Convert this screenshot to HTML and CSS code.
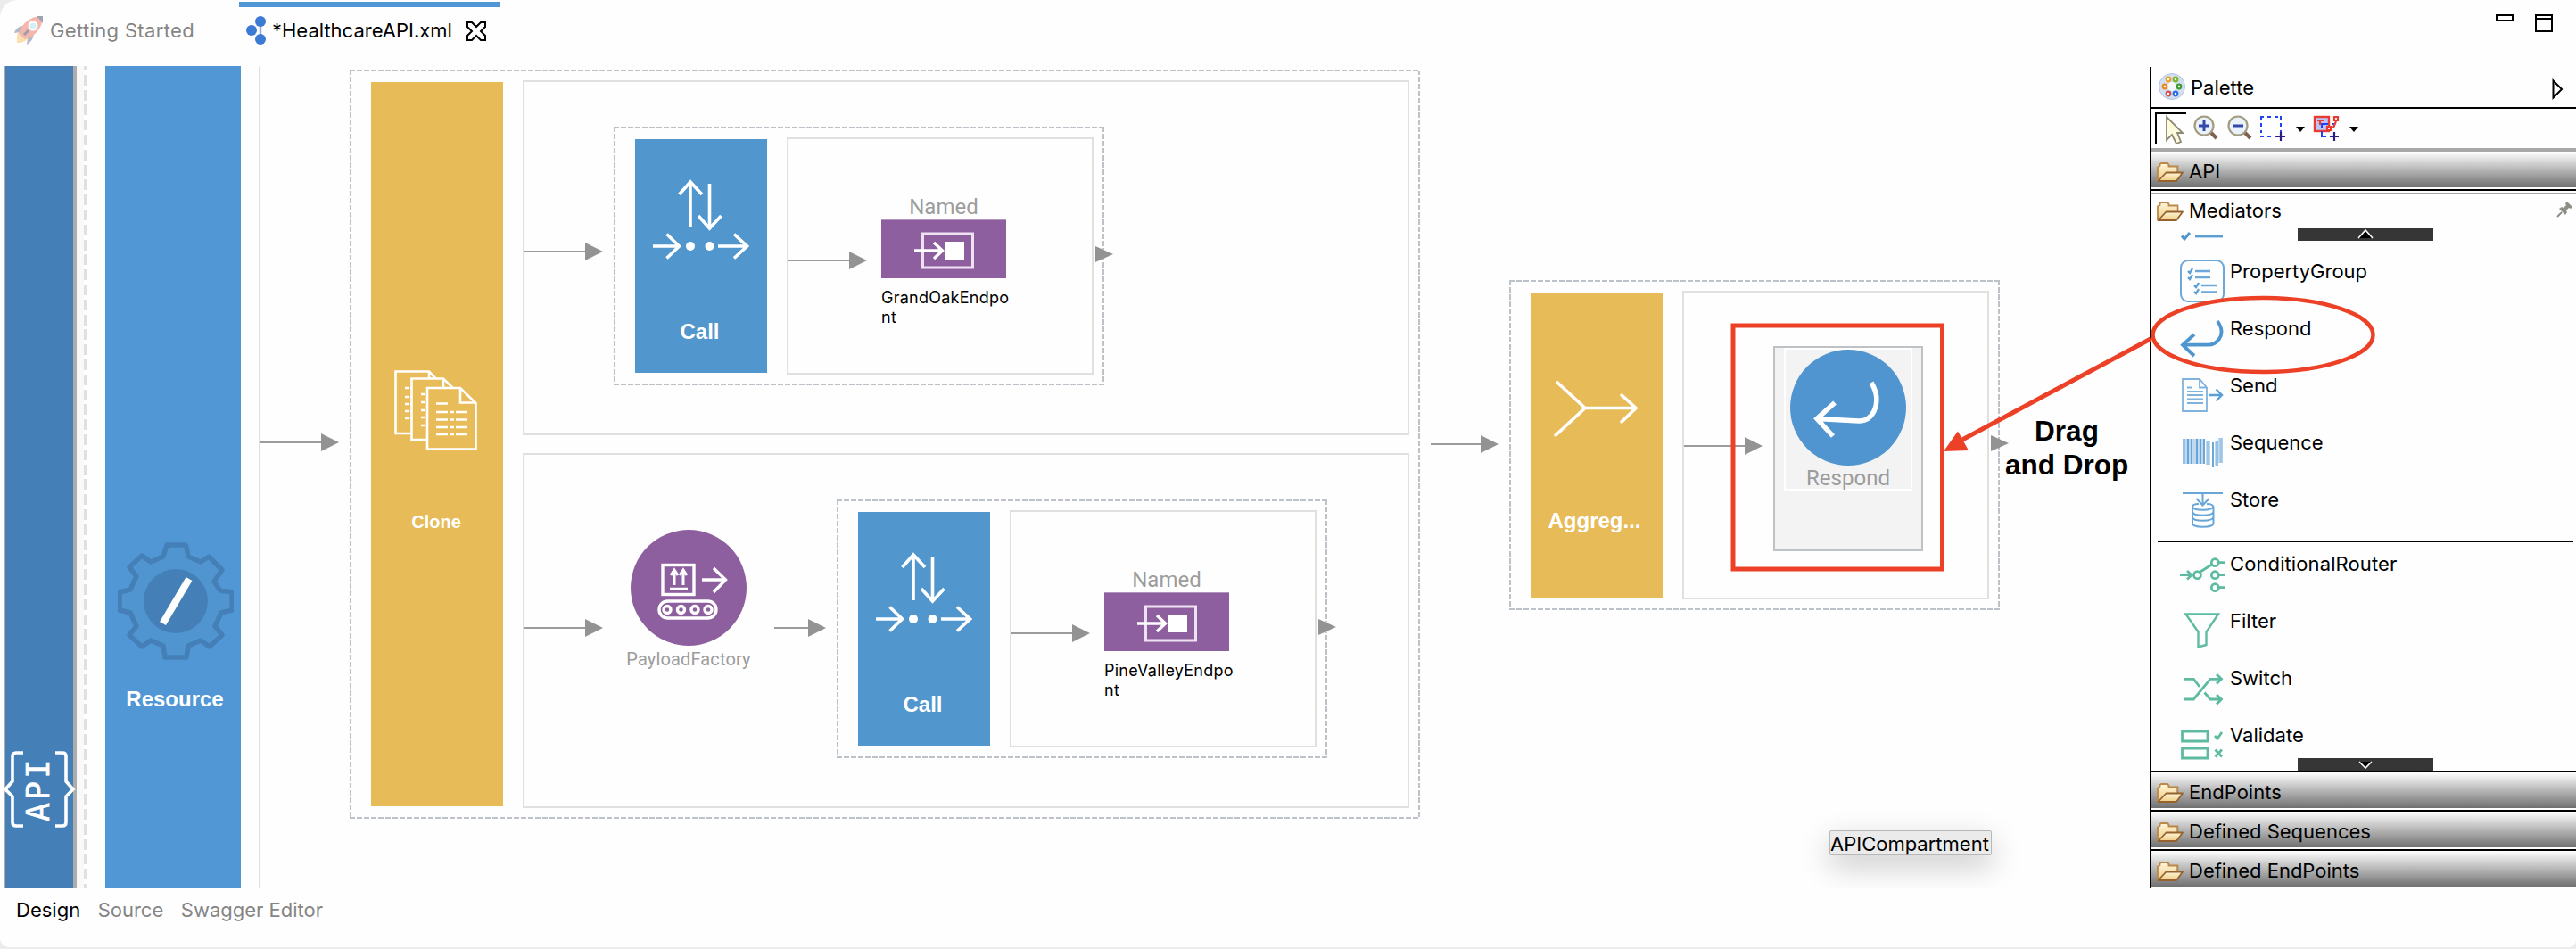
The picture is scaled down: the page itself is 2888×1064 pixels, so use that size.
FILE: index.html
```
<!DOCTYPE html>
<html lang="en">
<head>
<meta charset="utf-8">
<title>HealthcareAPI.xml</title>
<link rel="stylesheet" href="styles.css">
</head>
<body>
<svg class="defs" width="0" height="0" aria-hidden="true">
  <defs>
    <linearGradient id="folderFill" x1="0" y1="0" x2="0" y2="1">
      <stop offset="0" stop-color="#fff6dc"/><stop offset="1" stop-color="#efcb80"/>
    </linearGradient>
    <symbol id="folder" viewBox="0 0 30 22">
      <path d="M1 4V21H5L13 11H22V5H13L12 1H5Z" fill="url(#folderFill)"/>
      <path d="M1 21V5.500L3.500 4V2L5 1H12L13.500 2.500V4.500H23.500V11" fill="none" stroke="#bb8848" stroke-width="1.800"/>
      <path d="M1.500 21L10.500 11.500H29L22 21Z" fill="url(#folderFill)" stroke="#96632f" stroke-width="1.800" stroke-linejoin="round"/>
    </symbol>
    <symbol id="callIcon" viewBox="0 0 108 120">
      <g fill="none" stroke="#fff" stroke-width="3.600">
        <path d="M42 57V6M29.500 20L42 6L55 20"/>
        <path d="M63.500 8V58M51 44L63.500 58L76.500 44"/>
        <path d="M0 78H29M15.500 64.500L29.500 78L15.500 91.500"/>
        <path d="M73 78H105M91 64.500L105.500 78L91 91.500"/>
      </g>
      <circle cx="42" cy="78" r="5" fill="#fff"/><circle cx="63.500" cy="78" r="5" fill="#fff"/>
    </symbol>
    <symbol id="endpointIcon" viewBox="0 0 68 42">
      <g fill="none" stroke="#fff">
        <rect x="9.500" y="2" width="56" height="38" stroke-width="3" stroke="#eee2f2"/>
        <path d="M0 21H31M22 12L31.500 21L22 30" stroke-width="3.400"/>
      </g>
      <rect x="35" y="11" width="21" height="20" fill="#fff"/>
    </symbol>
  </defs>
</svg>

<div class="window">
  <header class="tabs">
    <div class="tab">
      <svg width="32" height="32" viewBox="0 0 32 32">
        <path d="M3 24C3 18 7 15 12 18L16 22C15 28 10 30 3 30Z" fill="#fbdfae"/>
        <path d="M0 19C2 13 7 10 13 11L8 18ZM22 17C22 23 20 29 14 32L15 25Z" fill="#b5bac6"/>
        <path d="M5 20C8 9 17 0 32 0C32 13 23 23 12 26Z" fill="#f5b7ab"/>
        <path d="M25 0H32V8Z" fill="#9ea4ae"/>
        <path d="M11 21L16 16" stroke="#98a0ae" stroke-width="3"/>
        <circle cx="21" cy="11" r="4.500" fill="#d4effa" stroke="#fff" stroke-width="2"/>
      </svg>
      <span class="tab-name spaced">Getting Started</span>
    </div>
    <div class="tab active">
      <svg width="22" height="32" viewBox="0 0 22 32">
        <path d="M16 6V26M6 16H10" stroke="#3b7bd4" stroke-width="2.500" stroke-opacity=".6"/>
        <g fill="#3b7bd4"><circle cx="16" cy="6" r="6"/><circle cx="6" cy="16" r="6"/><circle cx="16" cy="26" r="6"/></g>
      </svg>
      <span class="tab-name">*HealthcareAPI.xml</span>
      <svg class="close" width="22" height="22" viewBox="0 0 22 22">
        <path d="M1 1H6L11 6L16 1H21V6L16 11L21 16V21H16L11 16L6 21H1V16L6 11L1 6Z" fill="none" stroke="#000" stroke-width="2"/>
      </svg>
    </div>
    <svg class="window-buttons" width="66" height="22" viewBox="0 0 66 22">
      <path d="M1 1H19V7H1ZM45 1H63V19H45ZM45 5H63" fill="none" stroke="#000" stroke-width="2"/>
    </svg>
  </header>

  <div class="workbench">
    <main class="canvas">
      <div class="api-strip">
        <svg class="api-braces" width="82" height="86" viewBox="0 0 82 86">
          <path d="M22 2H14Q10 2 10 6V34L2 43L10 51V80Q10 84 14 84H22M58 2H66Q70 2 70 6V34L78 43L70 51V80Q70 84 66 84H58" fill="none" stroke="#fff" stroke-width="3.600"/>
        </svg>
        <span class="api-name">API</span>
      </div>
      <div class="api-gutter"></div>
      <div class="resource">
        <svg width="130" height="132" viewBox="-65 -66 130 132">
          <path d="M-10 -63H10Q12 -63 12.500 -58L14 -50L28 -44L37 -50L52 -35L43 -22L49 -13Q50 -11 58 -11L63 -10V10L51 13L44 28L52 38L38 51L28 44L14 50L12 63H-12L-14 50L-28 44L-38 51L-52 38L-44 28L-51 13L-63 10V-10L-51 -13L-44 -28L-52 -38L-38 -51L-28 -44L-14 -50Z" fill="#5095cf" stroke="#4480b7" stroke-width="5.500" stroke-linejoin="round"/>
          <circle r="36" fill="#4480b7"/>
          <path d="M15 -25L-14.500 25" stroke="#fff" stroke-width="8"/>
        </svg>
        <span class="label">Resource</span>
      </div>
      <div class="resource-edge"></div>

      <section class="group clone dashed">
        <div class="bar gold">
          <svg width="94" height="106" viewBox="0 0 94 106">
            <g fill="#e8bc58" stroke="#fff" stroke-width="2.600">
              <path d="M1.500 1.500H39L52 15V71H1.500Z"/><path d="M39 1.500V15"/>
              <path d="M19.500 9.500H55L70 24V78H19.500Z"/><path d="M55 9.500V22"/>
              <path d="M37 20H74L91.500 37V88.500H37Z"/><path d="M74 20V36.500H91.500" fill="none"/>
            </g>
            <path d="M12 20H19M12 30H19M12 38H19M12 46H19M12 54H19M30 27H37M30 36H37M30 45H37M30 53H37M30 62H37" stroke="#fff" stroke-width="2.400" stroke-dasharray="5 1"/>
            <path d="M47 37.500H61M47 47H82M47 55.500H82M47 64H82M47 72H82" stroke="#fff" stroke-width="2.600" stroke-dasharray="13 3 4 2"/>
          </svg>
          <span class="label small">Clone</span>
        </div>
        <div class="branches"><div class="box"></div><div class="box"></div></div>
      </section>

      <section class="group call first dashed">
        <div class="bar blue"><svg width="108" height="120"><use href="#callIcon"/></svg><span class="label">Call</span></div>
        <div class="box">
          <div class="endpoint">
            <span class="caption">Named</span>
            <div class="tile"><svg width="68" height="42"><use href="#endpointIcon"/></svg></div>
            <span class="endpoint-name">GrandOakEndpo<br>nt</span>
          </div>
        </div>
      </section>

      <div class="mediator payload">
        <svg width="130" height="130" viewBox="0 0 130 130">
          <circle cx="65" cy="65" r="65" fill="#8e5f9e"/>
          <g fill="none" stroke="#fff" stroke-width="3.400">
            <rect x="36" y="39.500" width="35" height="33"/>
            <path d="M49 62V46M45 51L49 45L53 51M59 62V46M55 51L59 45L63 51" stroke-width="3"/>
            <path d="M44 66H64" stroke-width="2.500"/>
            <path d="M80 56H107M93 43L106.500 56L93 70"/>
            <rect x="32" y="80" width="64" height="19" rx="9.500"/>
            <circle cx="41" cy="89.500" r="4"/><circle cx="56.500" cy="89.500" r="4"/><circle cx="72" cy="89.500" r="4"/><circle cx="87" cy="89.500" r="4"/>
          </g>
        </svg>
        <span class="caption small">PayloadFactory</span>
      </div>

      <section class="group call second dashed">
        <div class="bar blue"><svg width="108" height="120"><use href="#callIcon"/></svg><span class="label">Call</span></div>
        <div class="box">
          <div class="endpoint">
            <span class="caption">Named</span>
            <div class="tile"><svg width="68" height="42"><use href="#endpointIcon"/></svg></div>
            <span class="endpoint-name">PineValleyEndpo<br>nt</span>
          </div>
        </div>
      </section>

      <section class="group aggregate dashed">
        <div class="bar gold">
          <svg width="100" height="70" viewBox="0 0 100 70">
            <path d="M6 3L38 32.500L4 64M38 32.500H94M78 17L95 32.500L78 49" fill="none" stroke="#fff" stroke-width="3.600"/>
          </svg>
          <span class="label">Aggreg...</span>
        </div>
        <div class="box">
          <div class="respond">
            <div class="mediator framed">
              <svg width="130" height="130" viewBox="0 0 130 130">
                <circle cx="65" cy="65" r="65" fill="#5095cf"/>
                <path d="M91 37C97 47 99 58 94 69C90 77 84 80 77 80L30 77.500M50 59.500L30 77.500L48 97" fill="none" stroke="#fff" stroke-width="5.500"/>
              </svg>
              <span class="caption">Respond</span>
            </div>
          </div>
        </div>
      </section>

      <svg class="wires" width="2410" height="922" viewBox="0 74 2410 922">
        <g stroke="#9c9c9c" stroke-width="2" fill="none">
          <path d="M292 496H362M588 282H658M884 292H954M588 704H658M868 704H908M1134 710H1204M1604 498H1662M1888 500H1958"/>
        </g>
        <g fill="#939393">
          <path d="M360 486L380 496L360 506ZM656 272L676 282L656 292ZM952 282L972 292L952 302ZM656 694L676 704L656 714ZM906 694L926 704L906 714ZM1202 700L1222 710L1202 720ZM1660 488L1680 498L1660 508ZM1956 490L1976 500L1956 510Z"/>
          <path d="M1228 276L1248 285L1228 294ZM1478 694L1498 703L1478 712ZM2232 488L2252 497L2232 506Z"/>
        </g>
      </svg>

      <p class="note">Drag<br>and Drop</p>
      <div class="tooltip">APICompartment</div>
    </main>

    <aside class="palette">
      <div class="palette-head">
        <svg width="30" height="32" viewBox="0 0 30 32">
          <circle cx="15" cy="16" r="14.500" fill="#d3dff1" stroke="#b0c4e4"/>
          <circle cx="15" cy="16" r="5" fill="#f4f8fd"/>
          <g fill="#fff" stroke-width="2.200">
            <circle cx="11" cy="8" r="2.300" stroke="#f0a020"/><circle cx="19" cy="8" r="2.300" stroke="#7db728"/>
            <circle cx="7" cy="16" r="2.300" stroke="#ee8a1d"/><circle cx="23" cy="16" r="2.300" stroke="#3f9f2c"/>
            <circle cx="11" cy="24" r="2.300" stroke="#d05050"/><circle cx="19" cy="24" r="2.300" stroke="#2f6fe0"/>
          </g>
        </svg>
        <span>Palette</span>
        <svg class="collapse" width="14" height="24" viewBox="0 0 14 24"><path d="M1.500 2.500V21.500L11 12Z" fill="#fff" stroke="#000" stroke-width="2"/></svg>
      </div>
      <div class="toolbar">
        <svg width="36" height="44" viewBox="0 0 36 44">
          <path d="M1 39V5H35" fill="none" stroke="#000" stroke-width="2"/>
          <path d="M13 9V35L19 29L24 39L29 37L25 27H31Z" fill="#fdfbdc" stroke="#8d8975" stroke-width="1.800"/>
        </svg>
        <svg width="38" height="44" viewBox="0 0 38 44">
          <path d="M26 26L33 33" stroke="#80604f" stroke-width="4"/>
          <circle cx="19" cy="19" r="10.500" fill="#e9f1fa" stroke="#a39c80" stroke-width="2.200"/>
          <path d="M13 19H25M19 13V25" stroke="#3348a8" stroke-width="3"/>
        </svg>
        <svg width="38" height="44" viewBox="0 0 38 44">
          <path d="M26 26L33 33" stroke="#80604f" stroke-width="4"/>
          <circle cx="19" cy="19" r="10.500" fill="#e9f1fa" stroke="#a39c80" stroke-width="2.200"/>
          <path d="M13 19H25" stroke="#3348a8" stroke-width="3"/>
        </svg>
        <svg width="38" height="44" viewBox="0 0 38 44">
          <path d="M7 12V9H10M14 9H18M22 9H26M28 9H29V12M29 16V20M29 24V26M7 16V20M7 24V27M7 30V31H10M14 31H18M22 31H24" fill="none" stroke="#2044f0" stroke-width="2"/>
          <path d="M24 31H34M29 26V36" stroke="#2c1d86" stroke-width="2.200"/>
        </svg>
        <svg width="22" height="44" viewBox="0 0 22 44"><path d="M8 20H18L13 26Z"/></svg>
        <svg width="38" height="44" viewBox="0 0 38 44">
          <rect x="7" y="9" width="16" height="16" fill="#bcc4fb" stroke="#ea3c2e" stroke-width="2.400"/>
          <path d="M15 25V31H20M15 22V17H22M26 17H29V20" fill="none" stroke="#2044f0" stroke-width="2"/>
          <path d="M10 13H17M13 13V18M24 21H28L31 14" fill="none" stroke="#ea3c2e" stroke-width="2.200"/>
          <path d="M29 9H33V13H29ZM21 20H25V24H21Z" fill="#fff" stroke="#ea3c2e" stroke-width="2.200"/>
          <path d="M24 31H34M29 26V36" stroke="#2c1d86" stroke-width="2.200"/>
        </svg>
        <svg width="24" height="44" viewBox="0 0 24 44"><path d="M8 20H18L13 26Z"/></svg>
      </div>
      <div class="drawer first"><svg width="30" height="22"><use href="#folder"/></svg><span>API</span></div>
      <div class="double-rule"></div>
      <div class="mediators-head">
        <svg width="30" height="22"><use href="#folder"/></svg><span>Mediators</span>
        <svg class="pin" width="18" height="18" viewBox="0 0 18 18"><path d="M1 17L6 12" stroke="#8a8a80" stroke-width="1.800"/><path d="M3 8L6 6L8 7L11 4L10 2L12 0L18 6L16 8L14 7L11 10L12 12L10 15Z" fill="#8f8f86"/></svg>
      </div>
      <div class="list">
        <svg class="cut-item" width="50" height="35" viewBox="0 0 50 35"><path d="M2 8.500L5 12L11 5" fill="none" stroke="#4f96d0" stroke-width="3"/><path d="M17 9H48" stroke="#5b9fd5" stroke-width="2.800"/></svg>
        <div class="items">
          <div class="item">
            <svg width="50" height="48" viewBox="0 0 50 48" fill="none" stroke="#6da8d9">
              <rect x="1" y="1" width="48" height="46" rx="8" stroke-width="2"/>
              <path d="M9 13L11 15L14 10M9 20L11 22L14 17M16 29L18 31L21 26M16 36L18 38L21 33" stroke-width="2.400" stroke="#5b9fd5"/>
              <path d="M17 13H34M17 20H34M24 29H41M24 36.500H41" stroke-width="2.600"/>
            </svg><span>PropertyGroup</span>
          </div>
          <div class="item">
            <svg width="50" height="48" viewBox="0 0 50 48" fill="none" stroke="#4f96d0" stroke-width="3.800">
              <path d="M42 5C47 12 48 19 44 25Q39 31.700 32 31.700H3M16 20L3 31.700L16 44"/>
            </svg><span>Respond</span>
          </div>
          <div class="item">
            <svg width="50" height="48" viewBox="0 0 50 48" fill="none" stroke="#7fb2dd" stroke-width="1.800">
              <path d="M3 6H22L30 15.500V42H3ZM22 6V15.500H30"/>
              <path d="M8 15.500H14M8 20H26M8 24H26M8 28.500H26M8 33H26" stroke-dasharray="5 1 8 1"/>
              <path d="M33 24H46M40.500 17.500L47 24L40.500 30.500" stroke="#5b9fd5" stroke-width="2.400"/>
            </svg><span>Send</span>
          </div>
          <div class="item">
            <svg width="50" height="48" viewBox="0 0 50 48">
              <path d="M3 9H26V37H3ZM29 11H34V38H29ZM39 11H43V39H39ZM43 8H48V36H43Z" fill="#c0d9ef"/>
              <path d="M4.500 9V37M9 9V37M13 9V37M19 9V37M23 9V37M27 9V37M37 13V41M41.500 11V39" stroke="#5b9fd5" stroke-width="1.800"/>
              <path d="M31.500 11V38M46 8V36" stroke="#9dc5e8" stroke-width="3"/>
            </svg><span>Sequence</span>
          </div>
          <div class="item">
            <svg width="50" height="48" viewBox="0 0 50 48" fill="none" stroke="#68a5d8" stroke-width="2">
              <path d="M3 6H48M25.500 6V19M18.500 12L25.500 19.500L32.500 12"/>
              <path d="M14 21V40C14 45 37.500 45 37.500 40V21M14 21C15 17.500 20 18 21 18M37.500 21C36 17.500 31 18 30 18M14 21C15 26 36 26 37.500 21M14 27C15 32 36 32 37.500 27M14 33C15 38 36 38 37.500 33"/>
            </svg><span>Store</span>
          </div>
        </div>
        <hr class="divider">
        <div class="items">
          <div class="item">
            <svg width="50" height="48" viewBox="0 0 50 48" fill="none" stroke="#5ebba2" stroke-width="2.800">
              <path d="M0 25.700H13M8 21L13 25.700L8 30.500M23 22L35.500 14M43.500 11.700H50M43.500 25.700H50M43.500 39.700H50M13 25.700H15"/>
              <circle cx="19.500" cy="25.700" r="4"/><circle cx="39.300" cy="11.700" r="4"/><circle cx="39.300" cy="25.700" r="4"/><circle cx="39.300" cy="39.700" r="4"/>
            </svg><span class="wide">ConditionalRouter</span>
          </div>
          <div class="item">
            <svg width="50" height="48" viewBox="0 0 50 48" fill="none" stroke="#5ebba2" stroke-width="2.400">
              <path d="M6.500 5.500H43L29.500 25.500V40L20.500 42.500V25.500Z"/>
            </svg><span>Filter</span>
          </div>
          <div class="item">
            <svg width="50" height="48" viewBox="0 0 50 48" fill="none" stroke="#5ebba2" stroke-width="2.800">
              <path d="M4 14.300H15.300L22 23M27.500 29.500L34 37H45M4 37H15.300L34 14.300H45M41 9L46.500 14.300L41 19.500M41 32L46.500 37L41 42.500"/>
            </svg><span>Switch</span>
          </div>
          <div class="item">
            <svg width="50" height="48" viewBox="0 0 50 48" fill="none" stroke="#5ebba2" stroke-width="2.800">
              <path d="M2.500 9H31V20H2.500ZM2.500 28H31V39H2.500ZM39 14L42 17L47 10M39.500 29.500L47 37.500M47 29.500L39.500 37.500"/>
            </svg><span>Validate</span>
          </div>
        </div>
        <div class="scroller up"><svg width="18" height="14" viewBox="0 0 18 14"><path d="M1 11H17L9 2Z"/><path d="M1 11L9 2L17 11" fill="none" stroke="#fff" stroke-width="1.600"/></svg></div>
        <div class="scroller down"><svg width="18" height="14" viewBox="0 0 18 14"><path d="M1 4H17L9 11Z"/><path d="M2 4L9 11L16 4" fill="none" stroke="#fff" stroke-width="1.600"/></svg></div>
      </div>
      <div class="drawer"><svg width="30" height="22"><use href="#folder"/></svg><span>EndPoints</span></div>
      <div class="drawer"><svg width="30" height="22"><use href="#folder"/></svg><span>Defined Sequences</span></div>
      <div class="drawer"><svg width="30" height="22"><use href="#folder"/></svg><span>Defined EndPoints</span></div>
    </aside>
  </div>

  <footer class="modes">
    <span class="current">Design</span><span>Source</span><span>Swagger Editor</span>
  </footer>

  <svg class="annotations" width="2888" height="1062" viewBox="0 0 2888 1062">
    <g fill="none" stroke="#ec4126">
      <rect x="1943" y="365" width="234.500" height="273" stroke-width="5"/>
      <ellipse cx="2537" cy="375.500" rx="123.500" ry="41.500" stroke-width="4.500"/>
      <path d="M2411 380L2200 493" stroke-width="5"/>
    </g>
    <path d="M2179 506L2195 483.500L2207 505Z" fill="#ec4126"/>
  </svg>
</div>
</body>
</html>
```
FILE: styles.css
```
* { box-sizing: border-box; }
html { background: #ececec; }
body {
  margin: 0;
  font: 22px/26px Inter, "Liberation Sans", sans-serif;
  color: #000;
}
svg { display: block; flex: none; }
.defs { position: absolute; }

.window {
  position: relative;
  display: flex;
  flex-direction: column;
  width: 2888px;
  height: 1062px;
  background: #fefefe;
  border-radius: 20px 0 8px 10px;
  overflow: hidden;
}

/* editor tabs */
.tabs { display: flex; height: 74px; padding: 2px 24px 0 8px; }
.tab { display: flex; width: 260px; padding: 16px 8px 0; }
.tab-name { margin: 3px 0 0 7px; color: #858585; white-space: nowrap; }
.tab-name.spaced { margin-left: 8px; letter-spacing: .35px; }
.tab.active { width: 292px; padding-top: 10px; border-top: 6px solid #5197d5; }
.tab.active .tab-name { color: #000; }
.close { margin: 6px 0 0 16px; }
.window-buttons { margin: 14px 0 0 auto; }

.workbench { display: flex; height: 922px; }

/* diagram canvas */
.canvas { position: relative; display: flex; width: 2410px; height: 922px; overflow: hidden; }
.api-strip {
  position: relative;
  width: 82px;
  margin-left: 4px;
  background: #4480b7;
  border-left: 2px solid #adadad;
  border-right: 4px solid #adadad;
}
.api-braces { position: absolute; left: -2px; top: 768px; }
.api-name {
  position: absolute;
  left: 19px;
  top: 773px;
  width: 36px;
  height: 76px;
  writing-mode: vertical-rl;
  transform: rotate(180deg);
  text-align: center;
  font: 35px/36px "DejaVu Sans Mono", monospace;
  letter-spacing: 3px;
  color: #fff;
  -webkit-text-stroke: .6px #fff;
}
.api-gutter {
  width: 12px;
  background: repeating-linear-gradient(#e0e0e0 0 12px, #fff 12px 16.800px) right 0 top -7px / 4px 940px no-repeat #f9f9f9;
}
.resource {
  display: flex;
  flex-direction: column;
  align-items: center;
  width: 152px;
  margin-left: 20px;
  padding: 534px 0 0 6px;
  background: #5197d5;
}
.resource .label { margin: 30px 2px 0 0; }
.resource-edge { width: 2px; margin-left: 20px; background: #e0e0e0; }

.label { font: bold 24px/28px "Liberation Sans", Arial, sans-serif; color: #fff; }
.label.small { font-size: 20px; line-height: 24px; }
.caption { font: 24px/28px Roboto, sans-serif; color: #9c9c9c; }
.caption.small { font-size: 20px; line-height: 24px; letter-spacing: .15px; }

.group { position: absolute; display: flex; }
.dashed {
  --d: #bcc2c7;
  background:
    repeating-linear-gradient(90deg, var(--d) 0 6px, #fff 6px 8px) top / 100% 2px no-repeat,
    repeating-linear-gradient(90deg, var(--d) 0 6px, #fff 6px 8px) bottom / 100% 2px no-repeat,
    repeating-linear-gradient(var(--d) 0 6px, #fff 6px 8px) left / 2px 100% no-repeat,
    repeating-linear-gradient(var(--d) 0 6px, #fff 6px 8px) right / 2px 100% no-repeat;
}
.bar { display: flex; flex: none; flex-direction: column; align-items: center; width: 148px; margin: 2px 22px 2px 0; }
.gold { background: #e7bb58; }
.blue { background: #5296ce; }
.box { border: 2px solid #e0e0e0; }

.clone { left: 392px; top: 4px; width: 1200px; height: 840px; padding: 12px 12px 12px 24px; }
.clone .bar { padding: 323px 2px 0 0; }
.clone .label { margin-top: 52px; }
.branches { display: flex; flex: 1; flex-direction: column; gap: 20px; }
.branches .box { flex: 1; }

.call { width: 550px; height: 290px; padding: 12px 12px 12px 24px; }
.call.first { left: 688px; top: 68px; }
.call.second { left: 938px; top: 486px; }
.call .bar { padding: 42px 1px 0 0; }
.call .label { margin: 40px 2px 0 0; }
.call .box { flex: 1; padding: 62px 0 0 104px; }
.endpoint { display: flex; flex-direction: column; width: 140px; }
.endpoint .caption { width: 140px; text-align: center; }
.tile { display: flex; align-items: center; justify-content: center; width: 140px; height: 66px; padding: 2px 0 0 2px; background: #8e5f9e; border-top: 1px solid #b193bb; }
.endpoint-name { margin-top: 11px; font-size: 18px; line-height: 22px; letter-spacing: .25px; white-space: nowrap; }

.mediator { display: flex; flex-direction: column; align-items: center; }
.payload { position: absolute; left: 702px; top: 520px; width: 140px; }
.payload .caption { margin-top: 3px; }

.aggregate { left: 1692px; top: 240px; width: 550px; height: 370px; padding: 12px 12px 12px 24px; }
.aggregate .bar { padding: 97px 3px 0 0; }
.aggregate .label { margin: 75px 2px 0 0; }
.aggregate .box { flex: 1; padding: 60px 0 0 100px; }
.respond { width: 168px; height: 230px; padding-left: 10px; background: #f3f3f3; border: 2px solid #bcc2c6; }
.framed { width: 144px; height: 160px; border: 2px solid #fff; }
.framed .caption { margin-top: 1px; line-height: 26px; }

.wires { position: absolute; left: 0; top: 0; }
.note {
  position: absolute;
  left: 2237px;
  top: 390px;
  width: 160px;
  margin: 0;
  text-align: center;
  font: bold 31.500px/38px "Liberation Sans", Arial, sans-serif;
}
.tooltip {
  position: absolute;
  left: 2051px;
  top: 857px;
  width: 182px;
  height: 28px;
  background: #ebebeb;
  border: 1px solid #b8b8b8;
  border-radius: 2px;
  box-shadow: 0 12px 34px rgba(0, 0, 0, .22);
  text-indent: 0;
  line-height: 29px;
}

/* palette */
.palette { display: flex; flex: 1; flex-direction: column; border-left: 2px solid #000; margin-top: 1px; height: 921px; }
.palette-head { display: flex; align-items: flex-start; height: 47px; padding: 6px 13px 0 8px; border-bottom: 2px solid #000; }
.palette-head span { margin: 4px 0 0 6px; }
.collapse { margin: 7px 0 0 auto; }
.toolbar { display: flex; height: 44px; padding-left: 4px; }
.drawer { display: flex; height: 44px; padding: 9px 0 0 6px; border-top: 2px solid #000; background: linear-gradient(#fff, #707070) top / 100% 40px no-repeat; }
.drawer.first { border-top: 4px solid #000; border-image: linear-gradient(#a8a8a8 50%, #000 50%) 4 0 0 0; }
.drawer svg { margin: 3px 6px 0 0; }
.double-rule { height: 8px; border-top: 2px solid #fefefe; background: linear-gradient(#000 0 2px, #fefefe 2px 4px, #a8a8a8 4px); }
.mediators-head { display: flex; height: 38px; padding: 5px 4px 0 6px; }
.mediators-head svg { margin: 3px 6px 0 0; }
.mediators-head .pin { margin: 3px 0 0 auto; }
.list { position: relative; height: 608px; overflow: hidden; }
.cut-item { margin-left: 32px; }
.items { display: flex; flex-direction: column; gap: 16px; padding-left: 32px; }
.item { display: flex; gap: 6px; height: 48px; }
.item .wide { letter-spacing: .1px; }
.divider { height: 2px; margin: 11px 3px 11px 7px; border: 0; background: #000; }
.scroller { position: absolute; left: 164px; width: 152px; height: 14px; background: #363636; display: flex; justify-content: center; }
.scroller.up { top: 0; }
.scroller.down { bottom: 0; }

/* editor modes */
.modes { display: flex; gap: 19.500px; height: 66px; padding: 11px 0 0 18px; color: #858585; }
.modes .current { color: #000; }

.annotations { position: absolute; left: 0; top: 0; }
```
